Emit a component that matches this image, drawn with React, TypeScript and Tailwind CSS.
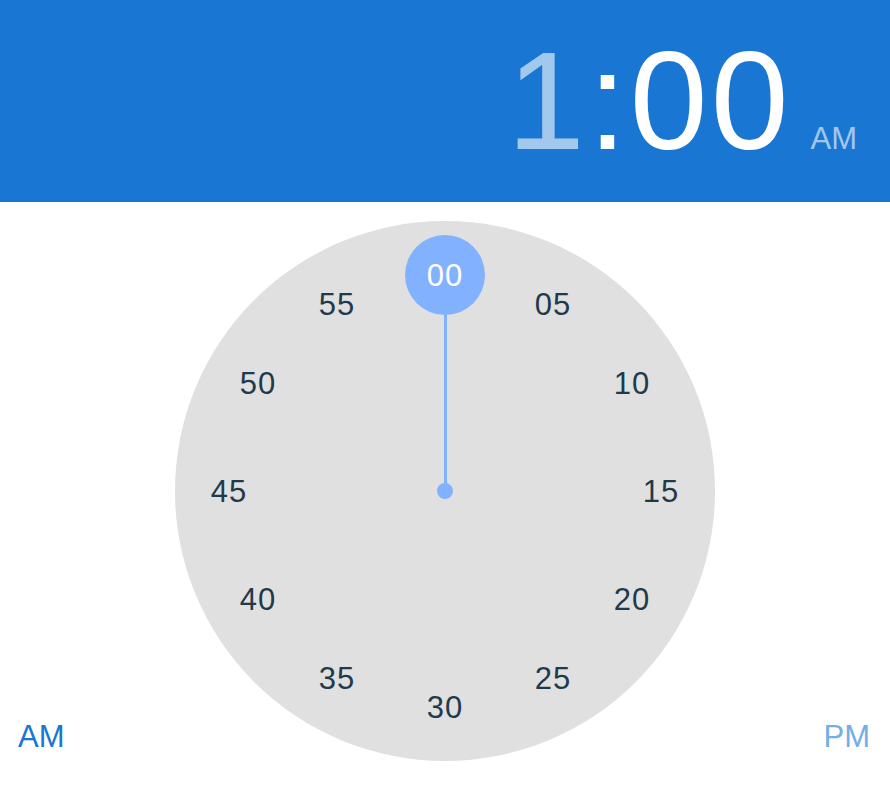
import React from "react";

const minutes = ["00", "05", "10", "15", "20", "25", "30", "35", "40", "45", "50", "55"];
const RADIUS = 216;

const ClockFace = () => {
  return (
    <div className="relative w-[540px] h-[540px] rounded-full bg-[#e0e0e0]">
      {/* hand: from the centre up to the selected marker */}
      <div className="absolute left-[269px] top-[54px] w-[3px] h-[216px] bg-[#82b1ff]" />
      <div className="absolute left-[262px] top-[262px] w-4 h-4 rounded-full bg-[#82b1ff]" />
      <div className="absolute left-[230px] top-[14px] w-20 h-20 rounded-full bg-[#82b1ff]" />
      {minutes.map((m, i) => {
        const a = (i * Math.PI) / 6;
        const x = 270 + RADIUS * Math.sin(a);
        const y = 270 - RADIUS * Math.cos(a);
        return (
          <span
            key={m}
            className={`absolute -translate-x-1/2 -translate-y-1/2 text-[31px] leading-none tracking-[1px] ${
              i === 0 ? "text-white" : "text-[#1f3a4b]"
            }`}
            style={{ left: x, top: y }}
          >
            {m}
          </span>
        );
      })}
    </div>
  );
};

const App = () => {
  return (
    <div className="w-[890px] h-[810px] bg-white font-['Liberation_Sans',Arial,sans-serif]">
      <header className="h-[202px] bg-[#1976d2] flex items-baseline justify-end pt-[31px] pr-[33px]">
        <span className="text-[140px] leading-none tracking-[3px] text-white">
          <span className="text-white/60">1</span>:00
        </span>
        <span className="ml-[19px] text-[31px] leading-none text-white/60">AM</span>
      </header>
      <div className="grid grid-cols-[1fr_540px_1fr] items-end pt-[19px]">
        <button className="justify-self-start pl-[18px] mb-[9px] text-[31px] leading-none text-[#1976d2]">
          AM
        </button>
        <ClockFace />
        <button className="justify-self-end pr-[20px] mb-[9px] text-[31px] leading-none text-[#73aee9]">
          PM
        </button>
      </div>
    </div>
  );
};

export default App;
